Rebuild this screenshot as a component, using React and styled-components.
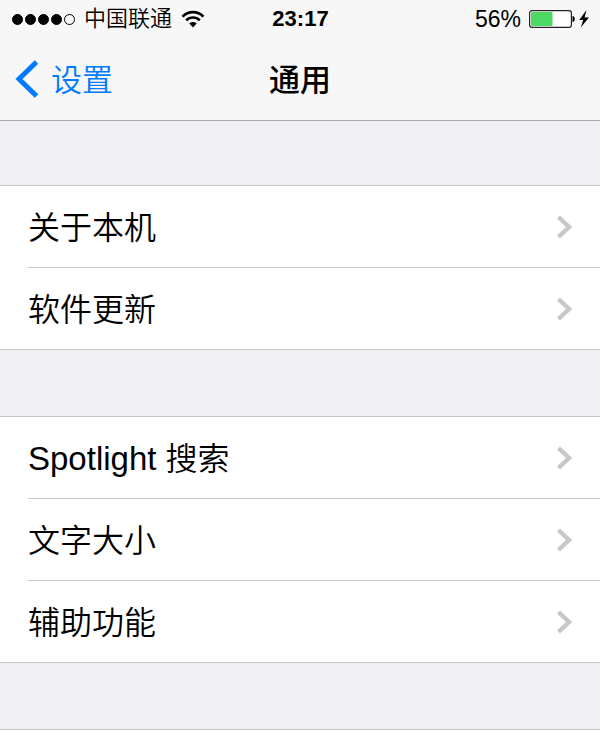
import React from 'react';
import styled, {createGlobalStyle} from 'styled-components';

const groups = [
  [{text: '关于本机'}, {text: '软件更新'}],
  [{latin: 'Spotlight', text: '搜索'}, {text: '文字大小'}, {text: '辅助功能'}],
];

const signal = [true, true, true, true, false];

const WifiIcon = () => (
  <svg width="24" height="18" viewBox="0 0 24 18" fill="none" stroke="#000">
    <path d="M1.5 6.6C7.4.6 16.6.6 22.5 6.6" strokeWidth="2.6" />
    <path d="M5.2 10.3c3.9-3.8 9.7-3.8 13.6 0" strokeWidth="2.5" />
    <path d="M12 17.4L8.3 13.6c2.1-2 5.3-2 7.4 0z" fill="#000" stroke="none" />
  </svg>
);

const BatteryIcon = () => (
  <svg width="60" height="20" viewBox="0 0 60 20">
    <rect x="0.6" y="1.6" width="41.8" height="16.8" rx="2.4" fill="#fff" stroke="#222" strokeWidth="1.2" />
    <rect x="2" y="3" width="21.5" height="14" rx="1" fill="#4cd964" />
    <path d="M43.5 7c3 .3 3 5.7 0 6z" fill="#000" />
    <path d="M57.5 1L50.2 11h4l-2.4 7.5L60 8.6h-4.4z" fill="#000" />
  </svg>
);

const BackIcon = () => (
  <svg width="24" height="38" viewBox="0 0 24 38" fill="none" stroke="#007aff">
    <path d="M21.5 2L4 19l17.5 17" strokeWidth="5" />
  </svg>
);

const ChevronIcon = () => (
  <svg width="16" height="24" viewBox="0 0 16 24" fill="none" stroke="#c7c7cc">
    <path d="M2.5 2l10.5 10L2.5 22" strokeWidth="4.4" />
  </svg>
);

const App = () => {
  return (
    <Page>
      <GlobalStyle />
      <Header>
        <StatusBar>
          <StatusLeft>
            <Signal>
              {signal.map((on, index) => (
                <Dot key={index} $on={on} />
              ))}
            </Signal>
            <span>中国联通</span>
            <WifiIcon />
          </StatusLeft>
          <Time>23:17</Time>
          <StatusRight>
            <Percent>56%</Percent>
            <BatteryIcon />
          </StatusRight>
        </StatusBar>
        <NavBar>
          <BackButton type="button">
            <BackIcon />
            <BackText>设置</BackText>
          </BackButton>
          <Title>通用</Title>
        </NavBar>
      </Header>
      <Content>
        {groups.map((items, index) => (
          <Group key={index}>
            {items.map((item) => (
              <Item key={item.text}>
                <ItemLink href="#">
                  <Label>
                    {item.latin && <Latin>{item.latin} </Latin>}
                    {item.text}
                  </Label>
                  <ChevronIcon />
                </ItemLink>
              </Item>
            ))}
          </Group>
        ))}
        <LastGroup />
      </Content>
    </Page>
  );
};
export default App;

const GlobalStyle = createGlobalStyle`
  * {
    box-sizing: border-box;
  }
  body {
    margin: 0;
    background: #efeff4;
    color: #000;
    font-family: 'Liberation Sans', 'Noto Sans CJK SC', sans-serif;
  }
  svg {
    display: block;
    flex: none;
  }
`;

const Page = styled.div`
  display: flex;
  flex-direction: column;
  min-height: 100vh;
`;

const Header = styled.header`
  background: #f7f7f7;
  border-bottom: 1px solid #a7a7ac;
`;

const StatusBar = styled.div`
  display: grid;
  grid-template-columns: 1fr auto 1fr;
  align-items: center;
  height: 38px;
  padding: 0 11px 0 12px;
  font-size: 22px;
  line-height: 32px;
`;

const StatusLeft = styled.div`
  display: flex;
  align-items: center;
  gap: 9px;
  font-weight: 350;
`;

const Signal = styled.div`
  display: flex;
  gap: 2px;
`;

const Dot = styled.i`
  width: 11px;
  height: 11px;
  border: 1px solid #000;
  border-radius: 50%;
  background: ${(props) => (props.$on ? '#000' : 'transparent')};
`;

const Time = styled.span`
  font-weight: 700;
`;

const StatusRight = styled.div`
  display: flex;
  align-items: center;
  justify-content: flex-end;
  gap: 8px;
`;

const Percent = styled.span`
  font-size: 23px;
`;

const NavBar = styled.nav`
  display: grid;
  grid-template-columns: 1fr auto 1fr;
  align-items: center;
  height: 82px;
  padding: 0 15px;
`;

const BackButton = styled.button`
  display: flex;
  align-items: center;
  justify-self: start;
  gap: 12px;
  padding: 0;
  border: 0;
  background: none;
  color: #007aff;
  font: inherit;
  cursor: pointer;
`;

const BackText = styled.span`
  padding-top: 3px;
  font-size: 31px;
  font-weight: 350;
  line-height: 40px;
`;

const Title = styled.h1`
  margin: 0;
  padding-top: 3px;
  font-size: 31px;
  font-weight: 500;
  line-height: 40px;
`;

const Content = styled.main`
  display: flex;
  flex: 1;
  flex-direction: column;
  gap: 66px;
  padding-top: 64px;
`;

const Group = styled.ul`
  margin: 0;
  padding: 0 0 0 28px;
  list-style: none;
  background: #fff;
  border-top: 1px solid #c8c7cc;
  border-bottom: 1px solid #c8c7cc;
`;

const LastGroup = styled.div`
  flex: 1;
  min-height: 2px;
  background: #fff;
  border-top: 1px solid #c8c7cc;
`;

const Item = styled.li`
  & + & {
    border-top: 1px solid #c8c7cc;
  }
`;

const ItemLink = styled.a`
  display: flex;
  align-items: center;
  justify-content: space-between;
  height: 81px;
  padding-right: 28px;
  color: inherit;
  text-decoration: none;
`;

const Label = styled.span`
  padding-top: 2px;
  font-size: 32px;
  font-weight: 350;
  line-height: 40px;
`;

const Latin = styled.span`
  font-size: 33px;
`;
